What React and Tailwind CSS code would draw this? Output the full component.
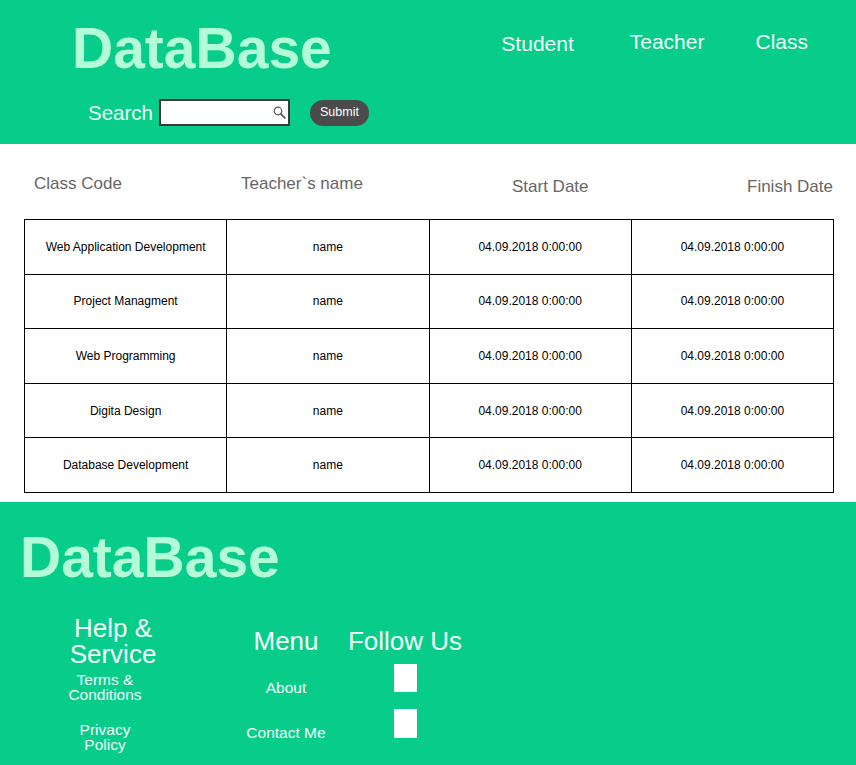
import React from "react";

const rows = [
  "Web Application Development",
  "Project Managment",
  "Web Programming",
  "Digita Design",
  "Database Development",
];

function SearchGlyph() {
  return (
    <svg width="13" height="13" viewBox="0 0 13 13" fill="none" stroke="#555" strokeWidth="1.2">
      <circle cx="5" cy="5" r="3.8" />
      <path d="M7.8 7.8 L11.8 11.8" strokeWidth="1.8" strokeLinecap="round" />
    </svg>
  );
}

export default function App() {
  return (
    <div className="w-[856px] min-h-[765px] bg-white font-['Liberation_Sans',Arial,sans-serif]">
      {/* header */}
      <header className="h-[144px] bg-[#08cc8a] flex flex-col">
        <div className="flex items-start">
          <h1 className="ml-[72px] mt-[20px] text-[57px] font-bold leading-none text-[#b4fcd7]">DataBase</h1>
          <nav className="ml-auto flex items-start text-[21px] leading-none text-[#effff8]">
            <a className="mt-[33px] mr-[56px]">Student</a>
            <a className="mt-[31px] mr-[51px]">Teacher</a>
            <a className="mt-[31px] mr-[48px]">Class</a>
          </nav>
        </div>
        <div className="mt-[22px] ml-[88px] flex items-center h-[27px]">
          <span className="text-[20.5px] leading-[27px] text-[#e6fff3]">Search</span>
          <div className="ml-[6px] flex items-center justify-end w-[131px] h-[27px] border-2 border-[#3a3a3a] bg-white pr-[2px]">
            <SearchGlyph />
          </div>
          <button className="ml-[20px] w-[59px] h-[26px] rounded-full bg-[#4b4b4b] text-[12.5px] text-white">Submit</button>
        </div>
      </header>

      {/* main */}
      <main className="h-[358px] flex flex-col">
        <div className="flex items-start text-[17px] leading-none text-[#666]">
          <span className="ml-[34px] mt-[31px] w-[207px]">Class Code</span>
          <span className="mt-[31px] w-[271px]">Teacher`s name</span>
          <span className="mt-[34px] w-[235px]">Start Date</span>
          <span className="mt-[34px]">Finish Date</span>
        </div>
        <div className="ml-[24px] mt-[24px] grid grid-cols-4 grid-rows-5 w-[810px] h-[274px] border-l border-t border-black text-[12px] text-black">
          {rows.map((r) => (
            <React.Fragment key={r}>
              <div className="flex items-center justify-center border-r border-b border-black">{r}</div>
              <div className="flex items-center justify-center border-r border-b border-black">name</div>
              <div className="flex items-center justify-center border-r border-b border-black">04.09.2018 0:00:00</div>
              <div className="flex items-center justify-center border-r border-b border-black">04.09.2018 0:00:00</div>
            </React.Fragment>
          ))}
        </div>
      </main>

      {/* footer */}
      <footer className="h-[263px] bg-[#08cc8a] flex flex-col">
        <h2 className="ml-[20px] mt-[27px] text-[57px] font-bold leading-none text-[#b4fcd7]">DataBase</h2>
        <div className="mt-[29px] flex items-start text-[#f2fff9]">
          <div className="ml-[20px] w-[170px] flex flex-col items-center text-center">
            <p className="pl-[16px] text-[26px] leading-[26px]">Help &amp;<br />Service</p>
            <a className="mt-[5px] text-[15.5px] leading-[15px]">Terms &amp;<br />Conditions</a>
            <a className="mt-[20px] text-[15.5px] leading-[15px]">Privacy<br />Policy</a>
          </div>
          <div className="ml-[36px] mt-[13px] w-[120px] flex flex-col items-center text-center">
            <p className="text-[26px] leading-[26px]">Menu</p>
            <a className="mt-[26px] text-[15.5px] leading-[15px]">About</a>
            <a className="mt-[30px] text-[15.5px] leading-[15px]">Contact Me</a>
          </div>
          <div className="mt-[13px] w-[118px] flex flex-col items-center">
            <p className="text-[26px] leading-[26px] whitespace-nowrap">Follow Us</p>
            <div className="mt-[10px] w-[23px] h-[28px] bg-white" />
            <div className="mt-[17px] w-[23px] h-[29px] bg-white" />
          </div>
        </div>
      </footer>
    </div>
  );
}
